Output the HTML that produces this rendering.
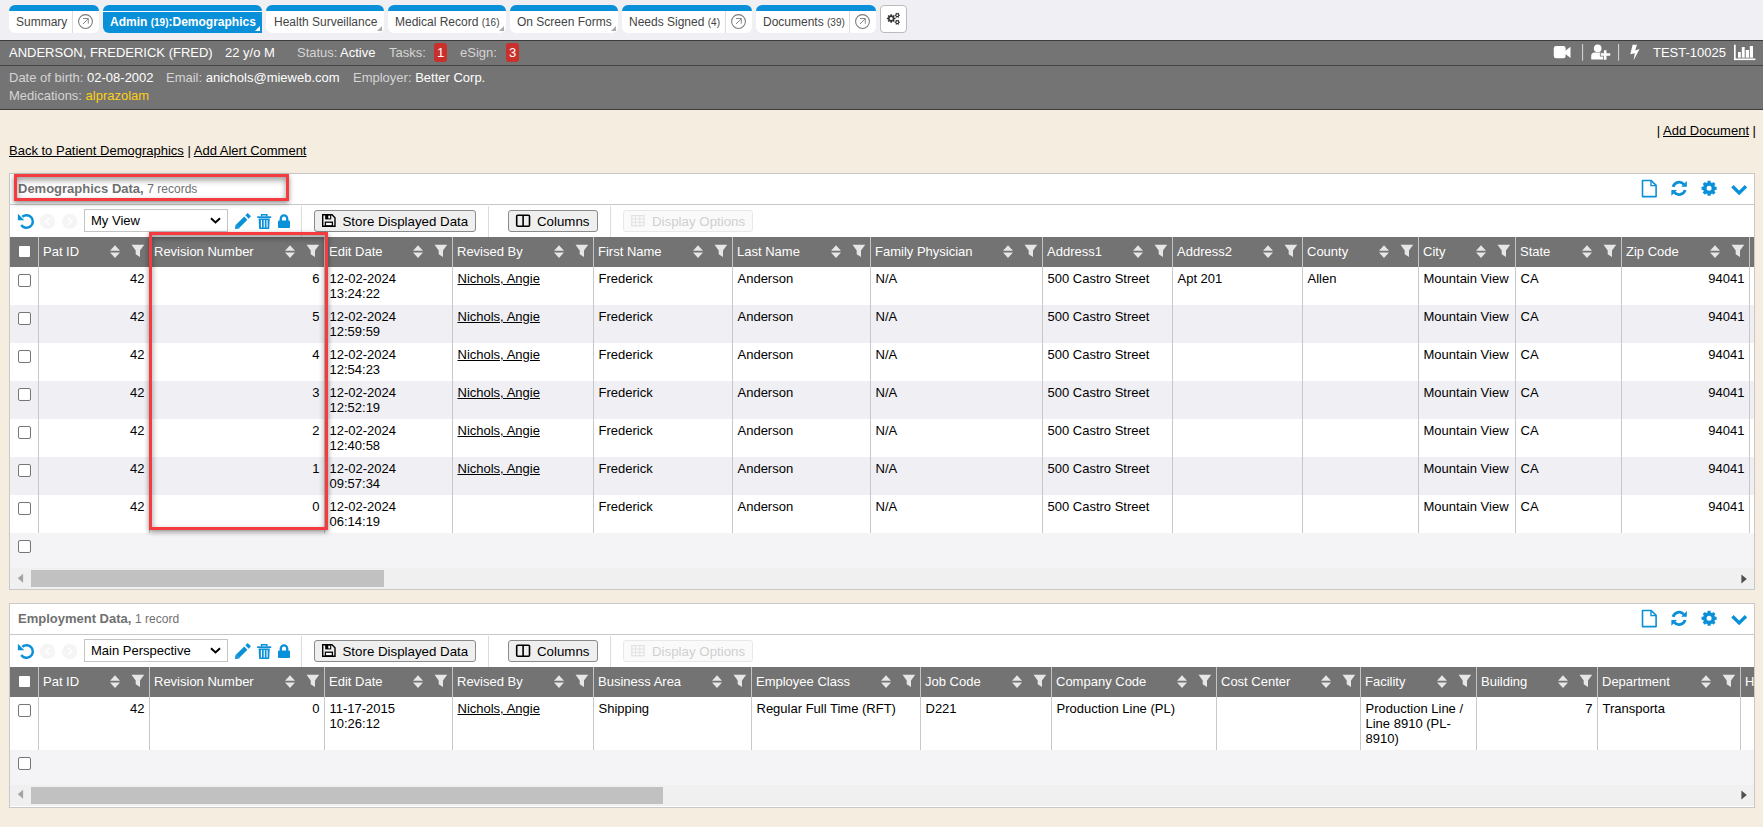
<!DOCTYPE html><html><head><meta charset="utf-8"><style>
*{box-sizing:border-box;margin:0;padding:0}
html,body{width:1763px;height:827px;overflow:hidden}
body{background:#f5eddf;font-family:"Liberation Sans",sans-serif;font-size:13px;color:#000;position:relative}
.abs{position:absolute}
#tabbar{position:absolute;left:0;top:0;width:1763px;height:40px;background:#efeff4}
.tab{position:absolute;top:5px;height:28px;background:#fff;border-top:6px solid #0a90d8;border-radius:6px;color:#444;font-size:12px;white-space:nowrap}
.tab .t{position:absolute;top:0;line-height:22px}
.tab .sm{font-size:10px}
.tab .dv{position:absolute;top:0;bottom:0;width:1px;background:#ddd}
.tab .ci{position:absolute;top:3px;width:15px;height:15px}
.tab .tri{position:absolute;right:2px;bottom:2px;width:0;height:0;border-left:5px solid transparent;border-bottom:5px solid #aaa}
.tab.act{background:#0a90d8;color:#fff;font-weight:bold}
.tab.act:before{content:"";position:absolute;left:0;right:0;top:0;height:1px;background:#fff}
.tab.act .tri{border-bottom-color:#fff}
#ph{position:absolute;left:0;top:40px;width:1763px;height:70px;background:#747474;border-top:1px solid #3c3c3c;border-bottom:1px solid #3c3c3c;color:#fff}
#ph .r1{position:absolute;left:0;top:0;width:100%;height:25px;border-bottom:1px solid #444}
#ph .lb{color:#d4d4d4}
.badge{position:absolute;top:2px;height:19px;background:#c9302c;color:#fff;border-radius:3px;text-align:center;line-height:19px;font-size:13px}
a{color:#000;text-decoration:underline}
.panel{position:absolute;left:9px;width:1746px;background:#fff;border:1px solid #c8c8c8;overflow:hidden}
.ptitle{position:absolute;left:0;top:0;width:100%;height:31px;border-bottom:1px solid #c8c8c8}
.ptitle .tt{position:absolute;left:8px;top:7px;line-height:15px;color:#707070;font-weight:bold;font-size:13px}
.ptitle .tt span{font-weight:normal;font-size:12px}
.sel{position:absolute;height:23px;border:1px solid #c4c4c4;background:#fff;font-size:13px;line-height:21px;padding-left:6px}
.btn{position:absolute;height:22px;border:1px solid #8a8a8a;border-radius:3px;background:#efefef;font-size:13.3px;line-height:20px;white-space:nowrap}
.btn.dis{border-color:#e8e8e8;background:#fafafa;color:#d0d0d0}
.vdiv{position:absolute;width:1px;background:#dcdcdc}
.ghead{position:absolute;left:0;height:30px;background:#737373}
.hc{position:absolute;top:0;height:30px;color:#fff;line-height:15px;padding-top:7px;padding-left:4px;white-space:nowrap}
.hd{position:absolute;top:0;height:30px;width:1px;background:#c4c4c4}
.bd{position:absolute;width:1px;background:#c8c8c8}
.row{position:absolute;left:0;width:100%}
.c{position:absolute;top:0;line-height:15px;padding:4px 4.5px;white-space:normal}
.c.r{text-align:right}
.cb{position:absolute;width:13px;height:13px;border:1px solid #767676;border-radius:2px;background:#fff}
.hcb{position:absolute;width:11px;height:11px;background:#fff;border-radius:1px}
.sb{position:absolute;left:0;height:21px;width:100%;background:#f0f0f0}
</style></head><body>
<div id="tabbar">
<div class="tab" style="left:9px;width:90px"><span class="t" style="left:7px">Summary</span><div class="dv" style="left:63px"></div><svg class="ci" style="left:69px" viewBox="0 0 15 15"><circle cx="7.5" cy="7.5" r="6.9" fill="none" stroke="#7a7a7a" stroke-width="1.05"/><path d="M5 10L10.1 4.9M5 4.5H10.3V9.7" fill="none" stroke="#7a7a7a" stroke-width="0.9"/></svg></div>
<div class="tab act" style="left:103px;width:159px;border-bottom-right-radius:0"><span class="t" style="left:7px">Admin <span class="sm">(19)</span>:Demographics</span><div class="tri"></div></div>
<div class="tab" style="left:266px;width:118px"><span class="t" style="left:8px">Health Surveillance</span><div class="tri"></div></div>
<div class="tab" style="left:388px;width:118px"><span class="t" style="left:7px">Medical Record <span class="sm">(16)</span></span><div class="tri"></div></div>
<div class="tab" style="left:510px;width:108px"><span class="t" style="left:7px">On Screen Forms</span><div class="tri"></div></div>
<div class="tab" style="left:622px;width:130px"><span class="t" style="left:7px">Needs Signed <span class="sm">(4)</span></span><div class="dv" style="left:103px"></div><svg class="ci" style="left:109px" viewBox="0 0 15 15"><circle cx="7.5" cy="7.5" r="6.9" fill="none" stroke="#7a7a7a" stroke-width="1.05"/><path d="M5 10L10.1 4.9M5 4.5H10.3V9.7" fill="none" stroke="#7a7a7a" stroke-width="0.9"/></svg></div>
<div class="tab" style="left:756px;width:120px"><span class="t" style="left:7px">Documents <span class="sm">(39)</span></span><div class="dv" style="left:93px"></div><svg class="ci" style="left:99px" viewBox="0 0 15 15"><circle cx="7.5" cy="7.5" r="6.9" fill="none" stroke="#7a7a7a" stroke-width="1.05"/><path d="M5 10L10.1 4.9M5 4.5H10.3V9.7" fill="none" stroke="#7a7a7a" stroke-width="0.9"/></svg></div>
<div class="abs" style="left:880px;top:5px;width:27px;height:28px;background:#fff;border:1px solid #bbb;border-radius:4px"></div>
</div>
<div id="ph"><div class="r1">
<span class="abs " style="left:9px;top:4px;line-height:15px;white-space:nowrap;">ANDERSON, FREDERICK (FRED)</span>
<span class="abs " style="left:225px;top:4px;line-height:15px;white-space:nowrap;">22 y/o M</span>
<span class="abs lb" style="left:297px;top:4px;line-height:15px;white-space:nowrap;">Status:</span>
<span class="abs " style="left:340px;top:4px;line-height:15px;white-space:nowrap;">Active</span>
<span class="abs lb" style="left:389px;top:4px;line-height:15px;white-space:nowrap;">Tasks:</span>
<div class="badge" style="left:434px;width:13px">1</div>
<span class="abs lb" style="left:460px;top:4px;line-height:15px;white-space:nowrap;">eSign:</span>
<div class="badge" style="left:506px;width:13px">3</div>
<span class="abs " style="left:1653px;top:4px;line-height:15px;white-space:nowrap;">TEST-10025</span>
</div>
<span class="abs lb" style="left:9px;top:29px;line-height:15px;white-space:nowrap;">Date of birth: <span style="color:#fff">02-08-2002</span></span>
<span class="abs lb" style="left:166px;top:29px;line-height:15px;white-space:nowrap;">Email: <span style="color:#fff">anichols@mieweb.com</span></span>
<span class="abs lb" style="left:353px;top:29px;line-height:15px;white-space:nowrap;">Employer: <span style="color:#fff">Better Corp.</span></span>
<span class="abs lb" style="left:9px;top:47px;line-height:15px;white-space:nowrap;">Medications: <span style="color:#fdd017">alprazolam</span></span>
</div>
<div class="abs" style="left:9px;top:143px;line-height:15px;white-space:nowrap"><a>Back to Patient Demographics</a> | <a>Add Alert Comment</a></div>
<div class="abs" style="right:7px;top:123px;line-height:15px;white-space:nowrap">| <a>Add Document</a> |</div>
<div class="panel" style="top:173px;height:417px">
<div class="ptitle"><div class="tt">Demographics Data, <span>7 records</span></div></div>
<div class="sel" style="left:74px;top:35px;width:144px">My View</div>
<div class="vdiv" style="left:291px;top:32px;height:31px"></div>
<div class="btn" style="left:304px;top:36px;width:162px"><span class="abs" style="left:27.5px;top:1px">Store Displayed Data</span></div>
<div class="vdiv" style="left:478px;top:32px;height:31px"></div>
<div class="btn" style="left:498px;top:36px;width:90px"><span class="abs" style="left:28px;top:1px">Columns</span></div>
<div class="vdiv" style="left:600px;top:32px;height:31px"></div>
<div class="btn dis" style="left:613px;top:36px;width:130px"><span class="abs" style="left:28px;top:0.5px">Display Options</span></div>
<div class="ghead" style="top:63px;width:1745px"></div>
<div class="hcb" style="left:9px;top:72px"></div>
<div class="hd" style="left:28px;top:63px"></div>
<div class="hc" style="left:29px;top:63px;width:110px">Pat ID</div>
<div class="hd" style="left:139px;top:63px"></div>
<div class="hc" style="left:140px;top:63px;width:174px">Revision Number</div>
<div class="hd" style="left:314px;top:63px"></div>
<div class="hc" style="left:315px;top:63px;width:127px">Edit Date</div>
<div class="hd" style="left:442px;top:63px"></div>
<div class="hc" style="left:443px;top:63px;width:140px">Revised By</div>
<div class="hd" style="left:583px;top:63px"></div>
<div class="hc" style="left:584px;top:63px;width:138px">First Name</div>
<div class="hd" style="left:722px;top:63px"></div>
<div class="hc" style="left:723px;top:63px;width:137px">Last Name</div>
<div class="hd" style="left:860px;top:63px"></div>
<div class="hc" style="left:861px;top:63px;width:171px">Family Physician</div>
<div class="hd" style="left:1032px;top:63px"></div>
<div class="hc" style="left:1033px;top:63px;width:129px">Address1</div>
<div class="hd" style="left:1162px;top:63px"></div>
<div class="hc" style="left:1163px;top:63px;width:129px">Address2</div>
<div class="hd" style="left:1292px;top:63px"></div>
<div class="hc" style="left:1293px;top:63px;width:115px">County</div>
<div class="hd" style="left:1408px;top:63px"></div>
<div class="hc" style="left:1409px;top:63px;width:96px">City</div>
<div class="hd" style="left:1505px;top:63px"></div>
<div class="hc" style="left:1506px;top:63px;width:105px">State</div>
<div class="hd" style="left:1611px;top:63px"></div>
<div class="hc" style="left:1612px;top:63px;width:127px">Zip Code</div>
<div class="hd" style="left:1739px;top:63px"></div>
<div class="hc" style="left:1740px;top:63px;width:50px"></div>
<div class="row" style="top:93px;height:38px;background:#fff">
<div class="cb" style="left:8px;top:7px"></div>
<div class="bd" style="left:28px;top:0;height:38px"></div>
<div class="c r" style="left:29px;width:110px">42</div>
<div class="bd" style="left:139px;top:0;height:38px"></div>
<div class="c r" style="left:140px;width:174px">6</div>
<div class="bd" style="left:314px;top:0;height:38px"></div>
<div class="c " style="left:315px;width:127px">12-02-2024<br>13:24:22</div>
<div class="bd" style="left:442px;top:0;height:38px"></div>
<div class="c " style="left:443px;width:140px"><a>Nichols, Angie</a></div>
<div class="bd" style="left:583px;top:0;height:38px"></div>
<div class="c " style="left:584px;width:138px">Frederick</div>
<div class="bd" style="left:722px;top:0;height:38px"></div>
<div class="c " style="left:723px;width:137px">Anderson</div>
<div class="bd" style="left:860px;top:0;height:38px"></div>
<div class="c " style="left:861px;width:171px">N/A</div>
<div class="bd" style="left:1032px;top:0;height:38px"></div>
<div class="c " style="left:1033px;width:129px">500 Castro Street</div>
<div class="bd" style="left:1162px;top:0;height:38px"></div>
<div class="c " style="left:1163px;width:129px">Apt 201</div>
<div class="bd" style="left:1292px;top:0;height:38px"></div>
<div class="c " style="left:1293px;width:115px">Allen</div>
<div class="bd" style="left:1408px;top:0;height:38px"></div>
<div class="c " style="left:1409px;width:96px">Mountain View</div>
<div class="bd" style="left:1505px;top:0;height:38px"></div>
<div class="c " style="left:1506px;width:105px">CA</div>
<div class="bd" style="left:1611px;top:0;height:38px"></div>
<div class="c r" style="left:1612px;width:127px">94041</div>
<div class="bd" style="left:1739px;top:0;height:38px"></div>
<div class="c " style="left:1740px;width:50px"></div>
</div>
<div class="row" style="top:131px;height:38px;background:#efeff4">
<div class="cb" style="left:8px;top:7px"></div>
<div class="bd" style="left:28px;top:0;height:38px"></div>
<div class="c r" style="left:29px;width:110px">42</div>
<div class="bd" style="left:139px;top:0;height:38px"></div>
<div class="c r" style="left:140px;width:174px">5</div>
<div class="bd" style="left:314px;top:0;height:38px"></div>
<div class="c " style="left:315px;width:127px">12-02-2024<br>12:59:59</div>
<div class="bd" style="left:442px;top:0;height:38px"></div>
<div class="c " style="left:443px;width:140px"><a>Nichols, Angie</a></div>
<div class="bd" style="left:583px;top:0;height:38px"></div>
<div class="c " style="left:584px;width:138px">Frederick</div>
<div class="bd" style="left:722px;top:0;height:38px"></div>
<div class="c " style="left:723px;width:137px">Anderson</div>
<div class="bd" style="left:860px;top:0;height:38px"></div>
<div class="c " style="left:861px;width:171px">N/A</div>
<div class="bd" style="left:1032px;top:0;height:38px"></div>
<div class="c " style="left:1033px;width:129px">500 Castro Street</div>
<div class="bd" style="left:1162px;top:0;height:38px"></div>
<div class="c " style="left:1163px;width:129px"></div>
<div class="bd" style="left:1292px;top:0;height:38px"></div>
<div class="c " style="left:1293px;width:115px"></div>
<div class="bd" style="left:1408px;top:0;height:38px"></div>
<div class="c " style="left:1409px;width:96px">Mountain View</div>
<div class="bd" style="left:1505px;top:0;height:38px"></div>
<div class="c " style="left:1506px;width:105px">CA</div>
<div class="bd" style="left:1611px;top:0;height:38px"></div>
<div class="c r" style="left:1612px;width:127px">94041</div>
<div class="bd" style="left:1739px;top:0;height:38px"></div>
<div class="c " style="left:1740px;width:50px"></div>
</div>
<div class="row" style="top:169px;height:38px;background:#fff">
<div class="cb" style="left:8px;top:7px"></div>
<div class="bd" style="left:28px;top:0;height:38px"></div>
<div class="c r" style="left:29px;width:110px">42</div>
<div class="bd" style="left:139px;top:0;height:38px"></div>
<div class="c r" style="left:140px;width:174px">4</div>
<div class="bd" style="left:314px;top:0;height:38px"></div>
<div class="c " style="left:315px;width:127px">12-02-2024<br>12:54:23</div>
<div class="bd" style="left:442px;top:0;height:38px"></div>
<div class="c " style="left:443px;width:140px"><a>Nichols, Angie</a></div>
<div class="bd" style="left:583px;top:0;height:38px"></div>
<div class="c " style="left:584px;width:138px">Frederick</div>
<div class="bd" style="left:722px;top:0;height:38px"></div>
<div class="c " style="left:723px;width:137px">Anderson</div>
<div class="bd" style="left:860px;top:0;height:38px"></div>
<div class="c " style="left:861px;width:171px">N/A</div>
<div class="bd" style="left:1032px;top:0;height:38px"></div>
<div class="c " style="left:1033px;width:129px">500 Castro Street</div>
<div class="bd" style="left:1162px;top:0;height:38px"></div>
<div class="c " style="left:1163px;width:129px"></div>
<div class="bd" style="left:1292px;top:0;height:38px"></div>
<div class="c " style="left:1293px;width:115px"></div>
<div class="bd" style="left:1408px;top:0;height:38px"></div>
<div class="c " style="left:1409px;width:96px">Mountain View</div>
<div class="bd" style="left:1505px;top:0;height:38px"></div>
<div class="c " style="left:1506px;width:105px">CA</div>
<div class="bd" style="left:1611px;top:0;height:38px"></div>
<div class="c r" style="left:1612px;width:127px">94041</div>
<div class="bd" style="left:1739px;top:0;height:38px"></div>
<div class="c " style="left:1740px;width:50px"></div>
</div>
<div class="row" style="top:207px;height:38px;background:#efeff4">
<div class="cb" style="left:8px;top:7px"></div>
<div class="bd" style="left:28px;top:0;height:38px"></div>
<div class="c r" style="left:29px;width:110px">42</div>
<div class="bd" style="left:139px;top:0;height:38px"></div>
<div class="c r" style="left:140px;width:174px">3</div>
<div class="bd" style="left:314px;top:0;height:38px"></div>
<div class="c " style="left:315px;width:127px">12-02-2024<br>12:52:19</div>
<div class="bd" style="left:442px;top:0;height:38px"></div>
<div class="c " style="left:443px;width:140px"><a>Nichols, Angie</a></div>
<div class="bd" style="left:583px;top:0;height:38px"></div>
<div class="c " style="left:584px;width:138px">Frederick</div>
<div class="bd" style="left:722px;top:0;height:38px"></div>
<div class="c " style="left:723px;width:137px">Anderson</div>
<div class="bd" style="left:860px;top:0;height:38px"></div>
<div class="c " style="left:861px;width:171px">N/A</div>
<div class="bd" style="left:1032px;top:0;height:38px"></div>
<div class="c " style="left:1033px;width:129px">500 Castro Street</div>
<div class="bd" style="left:1162px;top:0;height:38px"></div>
<div class="c " style="left:1163px;width:129px"></div>
<div class="bd" style="left:1292px;top:0;height:38px"></div>
<div class="c " style="left:1293px;width:115px"></div>
<div class="bd" style="left:1408px;top:0;height:38px"></div>
<div class="c " style="left:1409px;width:96px">Mountain View</div>
<div class="bd" style="left:1505px;top:0;height:38px"></div>
<div class="c " style="left:1506px;width:105px">CA</div>
<div class="bd" style="left:1611px;top:0;height:38px"></div>
<div class="c r" style="left:1612px;width:127px">94041</div>
<div class="bd" style="left:1739px;top:0;height:38px"></div>
<div class="c " style="left:1740px;width:50px"></div>
</div>
<div class="row" style="top:245px;height:38px;background:#fff">
<div class="cb" style="left:8px;top:7px"></div>
<div class="bd" style="left:28px;top:0;height:38px"></div>
<div class="c r" style="left:29px;width:110px">42</div>
<div class="bd" style="left:139px;top:0;height:38px"></div>
<div class="c r" style="left:140px;width:174px">2</div>
<div class="bd" style="left:314px;top:0;height:38px"></div>
<div class="c " style="left:315px;width:127px">12-02-2024<br>12:40:58</div>
<div class="bd" style="left:442px;top:0;height:38px"></div>
<div class="c " style="left:443px;width:140px"><a>Nichols, Angie</a></div>
<div class="bd" style="left:583px;top:0;height:38px"></div>
<div class="c " style="left:584px;width:138px">Frederick</div>
<div class="bd" style="left:722px;top:0;height:38px"></div>
<div class="c " style="left:723px;width:137px">Anderson</div>
<div class="bd" style="left:860px;top:0;height:38px"></div>
<div class="c " style="left:861px;width:171px">N/A</div>
<div class="bd" style="left:1032px;top:0;height:38px"></div>
<div class="c " style="left:1033px;width:129px">500 Castro Street</div>
<div class="bd" style="left:1162px;top:0;height:38px"></div>
<div class="c " style="left:1163px;width:129px"></div>
<div class="bd" style="left:1292px;top:0;height:38px"></div>
<div class="c " style="left:1293px;width:115px"></div>
<div class="bd" style="left:1408px;top:0;height:38px"></div>
<div class="c " style="left:1409px;width:96px">Mountain View</div>
<div class="bd" style="left:1505px;top:0;height:38px"></div>
<div class="c " style="left:1506px;width:105px">CA</div>
<div class="bd" style="left:1611px;top:0;height:38px"></div>
<div class="c r" style="left:1612px;width:127px">94041</div>
<div class="bd" style="left:1739px;top:0;height:38px"></div>
<div class="c " style="left:1740px;width:50px"></div>
</div>
<div class="row" style="top:283px;height:38px;background:#efeff4">
<div class="cb" style="left:8px;top:7px"></div>
<div class="bd" style="left:28px;top:0;height:38px"></div>
<div class="c r" style="left:29px;width:110px">42</div>
<div class="bd" style="left:139px;top:0;height:38px"></div>
<div class="c r" style="left:140px;width:174px">1</div>
<div class="bd" style="left:314px;top:0;height:38px"></div>
<div class="c " style="left:315px;width:127px">12-02-2024<br>09:57:34</div>
<div class="bd" style="left:442px;top:0;height:38px"></div>
<div class="c " style="left:443px;width:140px"><a>Nichols, Angie</a></div>
<div class="bd" style="left:583px;top:0;height:38px"></div>
<div class="c " style="left:584px;width:138px">Frederick</div>
<div class="bd" style="left:722px;top:0;height:38px"></div>
<div class="c " style="left:723px;width:137px">Anderson</div>
<div class="bd" style="left:860px;top:0;height:38px"></div>
<div class="c " style="left:861px;width:171px">N/A</div>
<div class="bd" style="left:1032px;top:0;height:38px"></div>
<div class="c " style="left:1033px;width:129px">500 Castro Street</div>
<div class="bd" style="left:1162px;top:0;height:38px"></div>
<div class="c " style="left:1163px;width:129px"></div>
<div class="bd" style="left:1292px;top:0;height:38px"></div>
<div class="c " style="left:1293px;width:115px"></div>
<div class="bd" style="left:1408px;top:0;height:38px"></div>
<div class="c " style="left:1409px;width:96px">Mountain View</div>
<div class="bd" style="left:1505px;top:0;height:38px"></div>
<div class="c " style="left:1506px;width:105px">CA</div>
<div class="bd" style="left:1611px;top:0;height:38px"></div>
<div class="c r" style="left:1612px;width:127px">94041</div>
<div class="bd" style="left:1739px;top:0;height:38px"></div>
<div class="c " style="left:1740px;width:50px"></div>
</div>
<div class="row" style="top:321px;height:38px;background:#fff">
<div class="cb" style="left:8px;top:7px"></div>
<div class="bd" style="left:28px;top:0;height:38px"></div>
<div class="c r" style="left:29px;width:110px">42</div>
<div class="bd" style="left:139px;top:0;height:38px"></div>
<div class="c r" style="left:140px;width:174px">0</div>
<div class="bd" style="left:314px;top:0;height:38px"></div>
<div class="c " style="left:315px;width:127px">12-02-2024<br>06:14:19</div>
<div class="bd" style="left:442px;top:0;height:38px"></div>
<div class="c " style="left:443px;width:140px"></div>
<div class="bd" style="left:583px;top:0;height:38px"></div>
<div class="c " style="left:584px;width:138px">Frederick</div>
<div class="bd" style="left:722px;top:0;height:38px"></div>
<div class="c " style="left:723px;width:137px">Anderson</div>
<div class="bd" style="left:860px;top:0;height:38px"></div>
<div class="c " style="left:861px;width:171px">N/A</div>
<div class="bd" style="left:1032px;top:0;height:38px"></div>
<div class="c " style="left:1033px;width:129px">500 Castro Street</div>
<div class="bd" style="left:1162px;top:0;height:38px"></div>
<div class="c " style="left:1163px;width:129px"></div>
<div class="bd" style="left:1292px;top:0;height:38px"></div>
<div class="c " style="left:1293px;width:115px"></div>
<div class="bd" style="left:1408px;top:0;height:38px"></div>
<div class="c " style="left:1409px;width:96px">Mountain View</div>
<div class="bd" style="left:1505px;top:0;height:38px"></div>
<div class="c " style="left:1506px;width:105px">CA</div>
<div class="bd" style="left:1611px;top:0;height:38px"></div>
<div class="c r" style="left:1612px;width:127px">94041</div>
<div class="bd" style="left:1739px;top:0;height:38px"></div>
<div class="c " style="left:1740px;width:50px"></div>
</div>
<div class="row" style="top:359px;height:35px;background:#f4f4f7"><div class="cb" style="left:8px;top:7px"></div></div>
<div class="sb" style="top:394px"><div class="abs" style="left:21px;top:2px;width:353px;height:17px;background:#c1c1c1"></div></div>
</div>
<div class="panel" style="top:603px;height:205px">
<div class="ptitle"><div class="tt">Employment Data, <span>1 record</span></div></div>
<div class="sel" style="left:74px;top:35px;width:144px">Main Perspective</div>
<div class="vdiv" style="left:291px;top:32px;height:31px"></div>
<div class="btn" style="left:304px;top:36px;width:162px"><span class="abs" style="left:27.5px;top:1px">Store Displayed Data</span></div>
<div class="vdiv" style="left:478px;top:32px;height:31px"></div>
<div class="btn" style="left:498px;top:36px;width:90px"><span class="abs" style="left:28px;top:1px">Columns</span></div>
<div class="vdiv" style="left:600px;top:32px;height:31px"></div>
<div class="btn dis" style="left:613px;top:36px;width:130px"><span class="abs" style="left:28px;top:0.5px">Display Options</span></div>
<div class="ghead" style="top:63px;width:1745px"></div>
<div class="hcb" style="left:9px;top:72px"></div>
<div class="hd" style="left:28px;top:63px"></div>
<div class="hc" style="left:29px;top:63px;width:110px">Pat ID</div>
<div class="hd" style="left:139px;top:63px"></div>
<div class="hc" style="left:140px;top:63px;width:174px">Revision Number</div>
<div class="hd" style="left:314px;top:63px"></div>
<div class="hc" style="left:315px;top:63px;width:127px">Edit Date</div>
<div class="hd" style="left:442px;top:63px"></div>
<div class="hc" style="left:443px;top:63px;width:140px">Revised By</div>
<div class="hd" style="left:583px;top:63px"></div>
<div class="hc" style="left:584px;top:63px;width:157px">Business Area</div>
<div class="hd" style="left:741px;top:63px"></div>
<div class="hc" style="left:742px;top:63px;width:168px">Employee Class</div>
<div class="hd" style="left:910px;top:63px"></div>
<div class="hc" style="left:911px;top:63px;width:130px">Job Code</div>
<div class="hd" style="left:1041px;top:63px"></div>
<div class="hc" style="left:1042px;top:63px;width:164px">Company Code</div>
<div class="hd" style="left:1206px;top:63px"></div>
<div class="hc" style="left:1207px;top:63px;width:143px">Cost Center</div>
<div class="hd" style="left:1350px;top:63px"></div>
<div class="hc" style="left:1351px;top:63px;width:115px">Facility</div>
<div class="hd" style="left:1466px;top:63px"></div>
<div class="hc" style="left:1467px;top:63px;width:120px">Building</div>
<div class="hd" style="left:1587px;top:63px"></div>
<div class="hc" style="left:1588px;top:63px;width:142px">Department</div>
<div class="hd" style="left:1730px;top:63px"></div>
<div class="hc" style="left:1731px;top:63px;width:59px">H</div>
<div class="row" style="top:93px;height:53px;background:#fff">
<div class="cb" style="left:8px;top:7px"></div>
<div class="bd" style="left:28px;top:0;height:53px"></div>
<div class="c r" style="left:29px;width:110px">42</div>
<div class="bd" style="left:139px;top:0;height:53px"></div>
<div class="c r" style="left:140px;width:174px">0</div>
<div class="bd" style="left:314px;top:0;height:53px"></div>
<div class="c " style="left:315px;width:127px">11-17-2015<br>10:26:12</div>
<div class="bd" style="left:442px;top:0;height:53px"></div>
<div class="c " style="left:443px;width:140px"><a>Nichols, Angie</a></div>
<div class="bd" style="left:583px;top:0;height:53px"></div>
<div class="c " style="left:584px;width:157px">Shipping</div>
<div class="bd" style="left:741px;top:0;height:53px"></div>
<div class="c " style="left:742px;width:168px">Regular Full Time (RFT)</div>
<div class="bd" style="left:910px;top:0;height:53px"></div>
<div class="c " style="left:911px;width:130px">D221</div>
<div class="bd" style="left:1041px;top:0;height:53px"></div>
<div class="c " style="left:1042px;width:164px">Production Line (PL)</div>
<div class="bd" style="left:1206px;top:0;height:53px"></div>
<div class="c " style="left:1207px;width:143px"></div>
<div class="bd" style="left:1350px;top:0;height:53px"></div>
<div class="c " style="left:1351px;width:115px">Production Line / Line 8910 (PL-8910)</div>
<div class="bd" style="left:1466px;top:0;height:53px"></div>
<div class="c r" style="left:1467px;width:120px">7</div>
<div class="bd" style="left:1587px;top:0;height:53px"></div>
<div class="c " style="left:1588px;width:142px">Transporta</div>
<div class="bd" style="left:1730px;top:0;height:53px"></div>
<div class="c " style="left:1731px;width:59px"></div>
</div>
<div class="row" style="top:146px;height:35px;background:#f4f4f7"><div class="cb" style="left:8px;top:7px"></div></div>
<div class="sb" style="top:181px"><div class="abs" style="left:21px;top:2px;width:632px;height:17px;background:#c1c1c1"></div></div>
</div>
<svg class="abs" style="left:0;top:0;z-index:5" width="1763" height="827" viewBox="0 0 1763 827"><rect x="1553.8" y="46" width="11.8" height="12.3" rx="2.2" fill="#fff"/><path d="M1564.8 51.2 L1570.5 46.8 V57.9 L1564.8 53.4 Z" fill="#fff"/><rect x="1582" y="44" width="1.1" height="16.7" fill="#cfcfcf"/><circle cx="1597.7" cy="48.4" r="3.8" fill="#fff"/><path d="M1591.2 59.6 V56 A3.6 3.6 0 0 1 1594.8 52.4 H1600.8 A3.6 3.6 0 0 1 1604.4 56 V59.6 Z" fill="#fff"/><path d="M1599.9 52.5 H1611 V56.5 H1599.9 Z M1603.2 49.5 H1607.2 V60.4 H1603.2 Z" fill="#747474"/><path d="M1600.7 53.2 H1610.2 V55.8 H1600.7 Z M1603.9 50.2 H1606.5 V59.7 H1603.9 Z" fill="#fff"/><rect x="1618" y="44" width="1.1" height="16.7" fill="#cfcfcf"/><path d="M1632.6 44.8 H1637 L1635.2 50.4 L1639.6 49.1 L1633.6 60.3 L1634.8 53.3 L1630.3 54.2 Z" fill="#fff"/><rect x="1734" y="44.7" width="1.7" height="15.4" fill="#fff"/><rect x="1734" y="58.5" width="21.4" height="1.6" fill="#fff"/><rect x="1738.0" y="52.0" width="2.8" height="5.7" fill="#fff"/><rect x="1741.8" y="47.0" width="2.9" height="10.7" fill="#fff"/><rect x="1745.7" y="50.0" width="3.3" height="7.7" fill="#fff"/><rect x="1749.8" y="46.0" width="3.2" height="11.7" fill="#fff"/><path fill-rule="evenodd" fill="#333" d="M894.40 17.70 L895.53 17.74 L895.53 19.26 L894.40 19.30 L894.03 20.20 L894.80 21.02 L893.72 22.10 L892.90 21.33 L892.00 21.70 L891.96 22.83 L890.44 22.83 L890.40 21.70 L889.50 21.33 L888.68 22.10 L887.60 21.02 L888.37 20.20 L888.00 19.30 L886.87 19.26 L886.87 17.74 L888.00 17.70 L888.37 16.80 L887.60 15.98 L888.68 14.90 L889.50 15.67 L890.40 15.30 L890.44 14.17 L891.96 14.17 L892.00 15.30 L892.90 15.67 L893.72 14.90 L894.80 15.98 L894.03 16.80 Z M889.60 18.50 a1.60 1.60 0 1 0 3.20 0 a1.60 1.60 0 1 0 -3.20 0 Z"/><path fill-rule="evenodd" fill="#333" d="M899.22 14.65 L899.94 14.64 L899.94 15.76 L899.22 15.75 L898.74 16.59 L899.11 17.21 L898.13 17.77 L897.78 17.14 L896.82 17.14 L896.47 17.77 L895.49 17.21 L895.86 16.59 L895.38 15.75 L894.66 15.76 L894.66 14.64 L895.38 14.65 L895.86 13.81 L895.49 13.19 L896.47 12.63 L896.82 13.26 L897.78 13.26 L898.13 12.63 L899.11 13.19 L898.74 13.81 Z M896.40 15.20 a0.90 0.90 0 1 0 1.80 0 a0.90 0.90 0 1 0 -1.80 0 Z"/><path fill-rule="evenodd" fill="#333" d="M899.22 21.65 L899.94 21.64 L899.94 22.76 L899.22 22.75 L898.74 23.59 L899.11 24.21 L898.13 24.77 L897.78 24.14 L896.82 24.14 L896.47 24.77 L895.49 24.21 L895.86 23.59 L895.38 22.75 L894.66 22.76 L894.66 21.64 L895.38 21.65 L895.86 20.81 L895.49 20.19 L896.47 19.63 L896.82 20.26 L897.78 20.26 L898.13 19.63 L899.11 20.19 L898.74 20.81 Z M896.40 22.20 a0.90 0.90 0 1 0 1.80 0 a0.90 0.90 0 1 0 -1.80 0 Z"/><g transform="translate(0 0)"><path d="M22.31 216.8 A6.3 6.3 0 1 1 21.28 225.02" fill="none" stroke="#0a90d8" stroke-width="2.5"/><path d="M17.9 213.8 L17.9 220.2 L24.3 220.2 Z" fill="#0a90d8"/></g><g transform="translate(0 0)"><circle cx="47.4" cy="221.4" r="7.7" fill="#f5f5f5"/><path d="M49.2 217.8 L45.6 221.4 L49.2 225" fill="none" stroke="#fff" stroke-width="1.6"/><circle cx="69.8" cy="221.4" r="7.7" fill="#f5f5f5"/><path d="M68 217.8 L71.6 221.4 L68 225" fill="none" stroke="#fff" stroke-width="1.6"/></g><g transform="translate(0 0)"><path d="M211 218.2 L215.5 222.4 L220 218.2" fill="none" stroke="#000" stroke-width="2"/><path d="M235 229 L235.6 224.3 L239.7 228.4 Z" fill="#0a90d8"/><path d="M237.6 226.4 L245.8 218.2" stroke="#0a90d8" stroke-width="4.6" fill="none"/><path d="M247 217 L249.3 214.7" stroke="#0a90d8" stroke-width="4.6" fill="none"/><rect x="257.2" y="216.3" width="14" height="1.7" fill="#0a90d8"/><path d="M261.6 216.5 V214.8 H266.8 V216.5" fill="none" stroke="#0a90d8" stroke-width="1.5"/><path fill-rule="evenodd" fill="#0a90d8" d="M258.6 218.6 H269.8 L269.2 229 H259.2 Z M260.9 220 V227.6 H262 V220 Z M263.7 220 V227.6 H264.8 V220 Z M266.5 220 V227.6 H267.6 V220 Z"/><path d="M280.8 221.5 V218.6 A3.2 3.2 0 0 1 287.2 218.6 V221.5" fill="none" stroke="#0a90d8" stroke-width="2.3"/><rect x="278" y="220.5" width="12" height="7.5" rx="1" fill="#0a90d8"/><path d="M322.7 214.7 H332 L335 217.7 V226.3 H322.7 Z" fill="none" stroke="#000" stroke-width="1.4"/><rect x="325.2" y="215" width="6" height="4.4" fill="#000"/><rect x="328.3" y="215.7" width="1.8" height="2.7" fill="#fff"/><rect x="325.4" y="222.2" width="7" height="3.6" fill="#fff" stroke="#000" stroke-width="1.3"/><rect x="516.7" y="215.3" width="12.8" height="11" rx="1" fill="none" stroke="#000" stroke-width="1.6"/><rect x="522.3" y="215.3" width="1.6" height="11" fill="#000"/><rect x="631.8" y="215.6" width="12.2" height="10.2" fill="none" stroke="#e2e2e2" stroke-width="1.2"/><path d="M631.8 219 H644 M631.8 222.4 H644 M635.6 215.6 V225.8 M639.8 215.6 V225.8" stroke="#e2e2e2" stroke-width="1"/></g><g transform="translate(0 0)"><path d="M1642.5 180.5 H1651.2 L1656.1 185.4 V196.6 H1642.5 Z" fill="none" stroke="#0a90d8" stroke-width="1.6" stroke-linejoin="round"/><path d="M1651 180.6 V185.6 H1656" fill="none" stroke="#0a90d8" stroke-width="1.4"/><path d="M1673.11 186.8 A6.2 6.2 0 0 1 1683.85 184.41" fill="none" stroke="#0a90d8" stroke-width="2.9"/><path d="M1686.8 181 V186.8 H1681.2 Z" fill="#0a90d8"/><path d="M1685.09 190 A6.2 6.2 0 0 1 1674.35 192.39" fill="none" stroke="#0a90d8" stroke-width="2.9"/><path d="M1671.4 189.9 H1677 L1671.4 195.7 Z" fill="#0a90d8"/><path fill-rule="evenodd" fill="#0a90d8" d="M1714.98 186.67 L1716.65 186.76 L1716.65 189.84 L1714.98 189.93 L1714.41 191.30 L1715.52 192.55 L1713.35 194.72 L1712.10 193.61 L1710.73 194.18 L1710.64 195.85 L1707.56 195.85 L1707.47 194.18 L1706.10 193.61 L1704.85 194.72 L1702.68 192.55 L1703.79 191.30 L1703.22 189.93 L1701.55 189.84 L1701.55 186.76 L1703.22 186.67 L1703.79 185.30 L1702.68 184.05 L1704.85 181.88 L1706.10 182.99 L1707.47 182.42 L1707.56 180.75 L1710.64 180.75 L1710.73 182.42 L1712.10 182.99 L1713.35 181.88 L1715.52 184.05 L1714.41 185.30 Z M1706.60 188.30 a2.50 2.50 0 1 0 5.00 0 a2.50 2.50 0 1 0 -5.00 0 Z"/><path d="M1732.4 186.2 L1739.2 192.9 L1746 186.2" fill="none" stroke="#0a90d8" stroke-width="3.4"/></g><g transform="translate(0 430)"><path d="M22.31 216.8 A6.3 6.3 0 1 1 21.28 225.02" fill="none" stroke="#0a90d8" stroke-width="2.5"/><path d="M17.9 213.8 L17.9 220.2 L24.3 220.2 Z" fill="#0a90d8"/></g><g transform="translate(0 430)"><circle cx="47.4" cy="221.4" r="7.7" fill="#f5f5f5"/><path d="M49.2 217.8 L45.6 221.4 L49.2 225" fill="none" stroke="#fff" stroke-width="1.6"/><circle cx="69.8" cy="221.4" r="7.7" fill="#f5f5f5"/><path d="M68 217.8 L71.6 221.4 L68 225" fill="none" stroke="#fff" stroke-width="1.6"/></g><g transform="translate(0 430)"><path d="M211 218.2 L215.5 222.4 L220 218.2" fill="none" stroke="#000" stroke-width="2"/><path d="M235 229 L235.6 224.3 L239.7 228.4 Z" fill="#0a90d8"/><path d="M237.6 226.4 L245.8 218.2" stroke="#0a90d8" stroke-width="4.6" fill="none"/><path d="M247 217 L249.3 214.7" stroke="#0a90d8" stroke-width="4.6" fill="none"/><rect x="257.2" y="216.3" width="14" height="1.7" fill="#0a90d8"/><path d="M261.6 216.5 V214.8 H266.8 V216.5" fill="none" stroke="#0a90d8" stroke-width="1.5"/><path fill-rule="evenodd" fill="#0a90d8" d="M258.6 218.6 H269.8 L269.2 229 H259.2 Z M260.9 220 V227.6 H262 V220 Z M263.7 220 V227.6 H264.8 V220 Z M266.5 220 V227.6 H267.6 V220 Z"/><path d="M280.8 221.5 V218.6 A3.2 3.2 0 0 1 287.2 218.6 V221.5" fill="none" stroke="#0a90d8" stroke-width="2.3"/><rect x="278" y="220.5" width="12" height="7.5" rx="1" fill="#0a90d8"/><path d="M322.7 214.7 H332 L335 217.7 V226.3 H322.7 Z" fill="none" stroke="#000" stroke-width="1.4"/><rect x="325.2" y="215" width="6" height="4.4" fill="#000"/><rect x="328.3" y="215.7" width="1.8" height="2.7" fill="#fff"/><rect x="325.4" y="222.2" width="7" height="3.6" fill="#fff" stroke="#000" stroke-width="1.3"/><rect x="516.7" y="215.3" width="12.8" height="11" rx="1" fill="none" stroke="#000" stroke-width="1.6"/><rect x="522.3" y="215.3" width="1.6" height="11" fill="#000"/><rect x="631.8" y="215.6" width="12.2" height="10.2" fill="none" stroke="#e2e2e2" stroke-width="1.2"/><path d="M631.8 219 H644 M631.8 222.4 H644 M635.6 215.6 V225.8 M639.8 215.6 V225.8" stroke="#e2e2e2" stroke-width="1"/></g><g transform="translate(0 430)"><path d="M1642.5 180.5 H1651.2 L1656.1 185.4 V196.6 H1642.5 Z" fill="none" stroke="#0a90d8" stroke-width="1.6" stroke-linejoin="round"/><path d="M1651 180.6 V185.6 H1656" fill="none" stroke="#0a90d8" stroke-width="1.4"/><path d="M1673.11 186.8 A6.2 6.2 0 0 1 1683.85 184.41" fill="none" stroke="#0a90d8" stroke-width="2.9"/><path d="M1686.8 181 V186.8 H1681.2 Z" fill="#0a90d8"/><path d="M1685.09 190 A6.2 6.2 0 0 1 1674.35 192.39" fill="none" stroke="#0a90d8" stroke-width="2.9"/><path d="M1671.4 189.9 H1677 L1671.4 195.7 Z" fill="#0a90d8"/><path fill-rule="evenodd" fill="#0a90d8" d="M1714.98 186.67 L1716.65 186.76 L1716.65 189.84 L1714.98 189.93 L1714.41 191.30 L1715.52 192.55 L1713.35 194.72 L1712.10 193.61 L1710.73 194.18 L1710.64 195.85 L1707.56 195.85 L1707.47 194.18 L1706.10 193.61 L1704.85 194.72 L1702.68 192.55 L1703.79 191.30 L1703.22 189.93 L1701.55 189.84 L1701.55 186.76 L1703.22 186.67 L1703.79 185.30 L1702.68 184.05 L1704.85 181.88 L1706.10 182.99 L1707.47 182.42 L1707.56 180.75 L1710.64 180.75 L1710.73 182.42 L1712.10 182.99 L1713.35 181.88 L1715.52 184.05 L1714.41 185.30 Z M1706.60 188.30 a2.50 2.50 0 1 0 5.00 0 a2.50 2.50 0 1 0 -5.00 0 Z"/><path d="M1732.4 186.2 L1739.2 192.9 L1746 186.2" fill="none" stroke="#0a90d8" stroke-width="3.4"/></g><path fill="#e6e6e6" d="M110.0 250.8 L115.0 245.3 L120.0 250.8 Z M110.0 252.4 L120.0 252.4 L115.0 258.0 Z"/><path fill="#e6e6e6" d="M131.5 244.8 H144.2 L140.0 250.5 V257.1 L135.7 254.3 V250.5 Z"/><path fill="#e6e6e6" d="M285.0 250.8 L290.0 245.3 L295.0 250.8 Z M285.0 252.4 L295.0 252.4 L290.0 258.0 Z"/><path fill="#e6e6e6" d="M306.5 244.8 H319.2 L315.0 250.5 V257.1 L310.7 254.3 V250.5 Z"/><path fill="#e6e6e6" d="M413.0 250.8 L418.0 245.3 L423.0 250.8 Z M413.0 252.4 L423.0 252.4 L418.0 258.0 Z"/><path fill="#e6e6e6" d="M434.5 244.8 H447.2 L443.0 250.5 V257.1 L438.7 254.3 V250.5 Z"/><path fill="#e6e6e6" d="M554.0 250.8 L559.0 245.3 L564.0 250.8 Z M554.0 252.4 L564.0 252.4 L559.0 258.0 Z"/><path fill="#e6e6e6" d="M575.5 244.8 H588.2 L584.0 250.5 V257.1 L579.7 254.3 V250.5 Z"/><path fill="#e6e6e6" d="M693.0 250.8 L698.0 245.3 L703.0 250.8 Z M693.0 252.4 L703.0 252.4 L698.0 258.0 Z"/><path fill="#e6e6e6" d="M714.5 244.8 H727.2 L723.0 250.5 V257.1 L718.7 254.3 V250.5 Z"/><path fill="#e6e6e6" d="M831.0 250.8 L836.0 245.3 L841.0 250.8 Z M831.0 252.4 L841.0 252.4 L836.0 258.0 Z"/><path fill="#e6e6e6" d="M852.5 244.8 H865.2 L861.0 250.5 V257.1 L856.7 254.3 V250.5 Z"/><path fill="#e6e6e6" d="M1003.0 250.8 L1008.0 245.3 L1013.0 250.8 Z M1003.0 252.4 L1013.0 252.4 L1008.0 258.0 Z"/><path fill="#e6e6e6" d="M1024.5 244.8 H1037.2 L1033.0 250.5 V257.1 L1028.7 254.3 V250.5 Z"/><path fill="#e6e6e6" d="M1133.0 250.8 L1138.0 245.3 L1143.0 250.8 Z M1133.0 252.4 L1143.0 252.4 L1138.0 258.0 Z"/><path fill="#e6e6e6" d="M1154.5 244.8 H1167.2 L1163.0 250.5 V257.1 L1158.7 254.3 V250.5 Z"/><path fill="#e6e6e6" d="M1263.0 250.8 L1268.0 245.3 L1273.0 250.8 Z M1263.0 252.4 L1273.0 252.4 L1268.0 258.0 Z"/><path fill="#e6e6e6" d="M1284.5 244.8 H1297.2 L1293.0 250.5 V257.1 L1288.7 254.3 V250.5 Z"/><path fill="#e6e6e6" d="M1379.0 250.8 L1384.0 245.3 L1389.0 250.8 Z M1379.0 252.4 L1389.0 252.4 L1384.0 258.0 Z"/><path fill="#e6e6e6" d="M1400.5 244.8 H1413.2 L1409.0 250.5 V257.1 L1404.7 254.3 V250.5 Z"/><path fill="#e6e6e6" d="M1476.0 250.8 L1481.0 245.3 L1486.0 250.8 Z M1476.0 252.4 L1486.0 252.4 L1481.0 258.0 Z"/><path fill="#e6e6e6" d="M1497.5 244.8 H1510.2 L1506.0 250.5 V257.1 L1501.7 254.3 V250.5 Z"/><path fill="#e6e6e6" d="M1582.0 250.8 L1587.0 245.3 L1592.0 250.8 Z M1582.0 252.4 L1592.0 252.4 L1587.0 258.0 Z"/><path fill="#e6e6e6" d="M1603.5 244.8 H1616.2 L1612.0 250.5 V257.1 L1607.7 254.3 V250.5 Z"/><path fill="#e6e6e6" d="M1710.0 250.8 L1715.0 245.3 L1720.0 250.8 Z M1710.0 252.4 L1720.0 252.4 L1715.0 258.0 Z"/><path fill="#e6e6e6" d="M1731.5 244.8 H1744.2 L1740.0 250.5 V257.1 L1735.7 254.3 V250.5 Z"/><path fill="#e6e6e6" d="M110.0 680.8 L115.0 675.3 L120.0 680.8 Z M110.0 682.4 L120.0 682.4 L115.0 688.0 Z"/><path fill="#e6e6e6" d="M131.5 674.8 H144.2 L140.0 680.5 V687.1 L135.7 684.3 V680.5 Z"/><path fill="#e6e6e6" d="M285.0 680.8 L290.0 675.3 L295.0 680.8 Z M285.0 682.4 L295.0 682.4 L290.0 688.0 Z"/><path fill="#e6e6e6" d="M306.5 674.8 H319.2 L315.0 680.5 V687.1 L310.7 684.3 V680.5 Z"/><path fill="#e6e6e6" d="M413.0 680.8 L418.0 675.3 L423.0 680.8 Z M413.0 682.4 L423.0 682.4 L418.0 688.0 Z"/><path fill="#e6e6e6" d="M434.5 674.8 H447.2 L443.0 680.5 V687.1 L438.7 684.3 V680.5 Z"/><path fill="#e6e6e6" d="M554.0 680.8 L559.0 675.3 L564.0 680.8 Z M554.0 682.4 L564.0 682.4 L559.0 688.0 Z"/><path fill="#e6e6e6" d="M575.5 674.8 H588.2 L584.0 680.5 V687.1 L579.7 684.3 V680.5 Z"/><path fill="#e6e6e6" d="M712.0 680.8 L717.0 675.3 L722.0 680.8 Z M712.0 682.4 L722.0 682.4 L717.0 688.0 Z"/><path fill="#e6e6e6" d="M733.5 674.8 H746.2 L742.0 680.5 V687.1 L737.7 684.3 V680.5 Z"/><path fill="#e6e6e6" d="M881.0 680.8 L886.0 675.3 L891.0 680.8 Z M881.0 682.4 L891.0 682.4 L886.0 688.0 Z"/><path fill="#e6e6e6" d="M902.5 674.8 H915.2 L911.0 680.5 V687.1 L906.7 684.3 V680.5 Z"/><path fill="#e6e6e6" d="M1012.0 680.8 L1017.0 675.3 L1022.0 680.8 Z M1012.0 682.4 L1022.0 682.4 L1017.0 688.0 Z"/><path fill="#e6e6e6" d="M1033.5 674.8 H1046.2 L1042.0 680.5 V687.1 L1037.7 684.3 V680.5 Z"/><path fill="#e6e6e6" d="M1177.0 680.8 L1182.0 675.3 L1187.0 680.8 Z M1177.0 682.4 L1187.0 682.4 L1182.0 688.0 Z"/><path fill="#e6e6e6" d="M1198.5 674.8 H1211.2 L1207.0 680.5 V687.1 L1202.7 684.3 V680.5 Z"/><path fill="#e6e6e6" d="M1321.0 680.8 L1326.0 675.3 L1331.0 680.8 Z M1321.0 682.4 L1331.0 682.4 L1326.0 688.0 Z"/><path fill="#e6e6e6" d="M1342.5 674.8 H1355.2 L1351.0 680.5 V687.1 L1346.7 684.3 V680.5 Z"/><path fill="#e6e6e6" d="M1437.0 680.8 L1442.0 675.3 L1447.0 680.8 Z M1437.0 682.4 L1447.0 682.4 L1442.0 688.0 Z"/><path fill="#e6e6e6" d="M1458.5 674.8 H1471.2 L1467.0 680.5 V687.1 L1462.7 684.3 V680.5 Z"/><path fill="#e6e6e6" d="M1558.0 680.8 L1563.0 675.3 L1568.0 680.8 Z M1558.0 682.4 L1568.0 682.4 L1563.0 688.0 Z"/><path fill="#e6e6e6" d="M1579.5 674.8 H1592.2 L1588.0 680.5 V687.1 L1583.7 684.3 V680.5 Z"/><path fill="#e6e6e6" d="M1701.0 680.8 L1706.0 675.3 L1711.0 680.8 Z M1701.0 682.4 L1711.0 682.4 L1706.0 688.0 Z"/><path fill="#e6e6e6" d="M1722.5 674.8 H1735.2 L1731.0 680.5 V687.1 L1726.7 684.3 V680.5 Z"/><path d="M23.1 573.8 V582.8 L17.8 578.3 Z" fill="#a3a3a3"/><path d="M1741.4 574.4 V583.5 L1746.8 579 Z" fill="#505050"/><path d="M23.1 789.8 V798.8 L17.8 794.3 Z" fill="#a3a3a3"/><path d="M1741.4 790.4 V799.5 L1746.8 795 Z" fill="#505050"/></svg>
<div class="abs" style="z-index:6;left:14px;top:174px;width:275px;height:27px;border:3px solid #f43b3f;box-shadow:0 2px 5px rgba(0,0,0,.45), inset 0 3px 6px rgba(0,0,0,.4)"></div>
<div class="abs" style="z-index:6;left:149px;top:232px;width:179px;height:298px;border:3px solid #f43b3f;box-shadow:0 2px 5px rgba(0,0,0,.45), inset 0 3px 6px rgba(0,0,0,.4)"></div>
</body></html>
